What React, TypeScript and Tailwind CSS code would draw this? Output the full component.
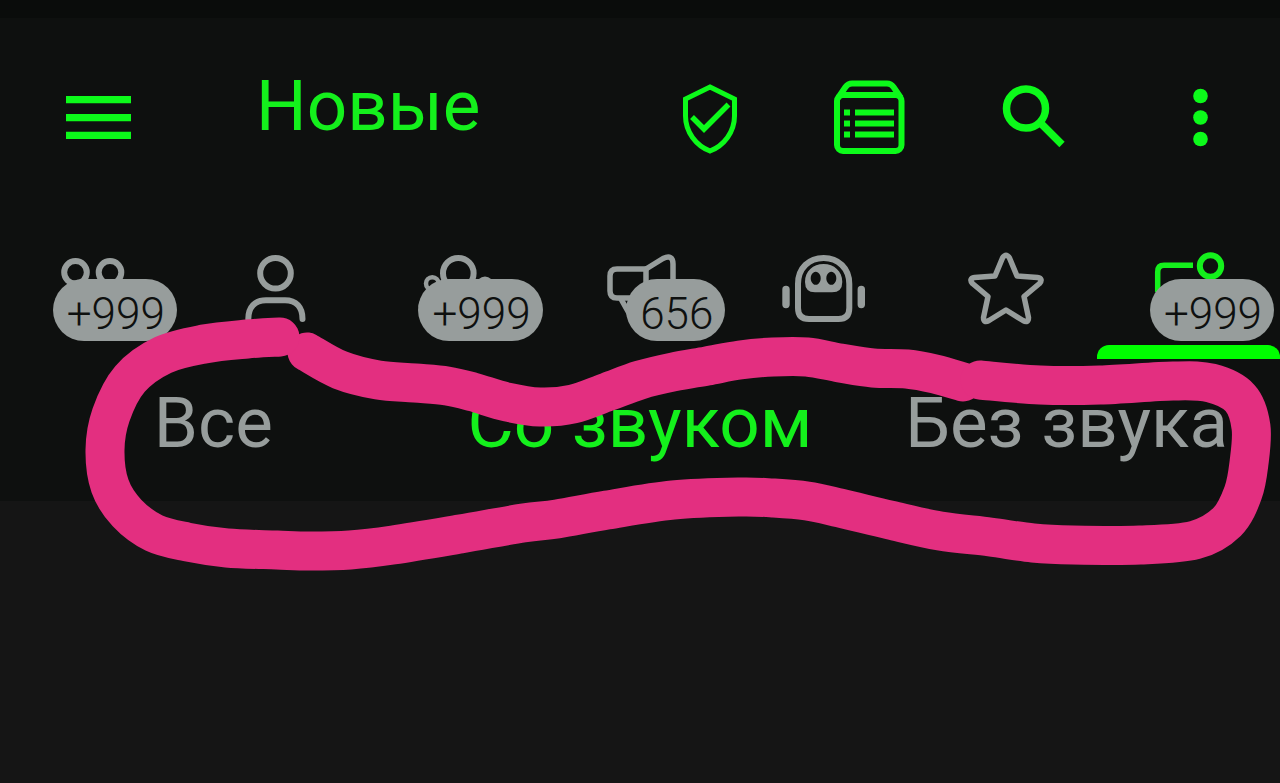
import React, { useState } from 'react';
import { clsx } from 'clsx';

type Point = [number, number];

// Catmull-Rom spline through the points of a hand-drawn stroke
function smoothPath(points: Point[]) {
  let d = `M${points[0][0]} ${points[0][1]}`;
  for (let i = 0; i < points.length - 1; i++) {
    const p0 = points[Math.max(i - 1, 0)];
    const p1 = points[i];
    const p2 = points[i + 1];
    const p3 = points[Math.min(i + 2, points.length - 1)];
    d += ` C${p1[0] + (p2[0] - p0[0]) / 6} ${p1[1] + (p2[1] - p0[1]) / 6}`;
    d += ` ${p2[0] - (p3[0] - p1[0]) / 6} ${p2[1] - (p3[1] - p1[1]) / 6}`;
    d += ` ${p2[0]} ${p2[1]}`;
  }
  return d;
}

const topStroke: Point[] = [
  [307, 352], [340, 370], [378, 380], [415, 383], [447, 386], [473, 392], [507, 402], [540, 407],
  [573, 404], [607, 392], [640, 380], [673, 372], [707, 366], [740, 360], [773, 357], [807, 357],
  [840, 363], [873, 368], [907, 369], [935, 374], [963, 382],
];

const loopStroke: Point[] = [
  [980, 380], [1040, 385], [1100, 385], [1173, 381], [1211, 383], [1240, 398], [1251, 427],
  [1249, 463], [1243, 493], [1227, 522], [1195, 540], [1140, 545], [1073, 545], [1033, 543],
  [990, 537], [940, 531], [890, 520], [840, 508], [807, 501], [773, 498], [740, 497], [673, 500],
  [607, 510], [557, 519], [523, 523], [460, 534], [393, 545], [350, 550], [310, 551], [277, 550],
  [227, 548], [187, 542], [154, 533], [127, 513], [110, 486], [105, 450], [111, 415], [130, 379],
  [163, 355], [204, 344], [247, 339], [280, 337],
];

function Marker() {
  return (
    <svg
      viewBox="0 0 1280 783"
      className="absolute inset-x-0 top-0 w-full pointer-events-none"
      fill="none"
      stroke="#e32f80"
      strokeWidth="39"
      strokeLinecap="round"
      strokeLinejoin="round"
      aria-hidden="true"
    >
      <path d={smoothPath(topStroke)} />
      <path d={smoothPath(loopStroke)} />
    </svg>
  );
}

function HeaderIcon({ children }: { children: React.ReactNode }) {
  return (
    <svg viewBox="0 0 96 96" className="w-24 h-24" fill="none" stroke="currentColor" aria-hidden="true">
      {children}
    </svg>
  );
}

const actions = [
  {
    label: 'Защита',
    icon: (
      <g strokeWidth="5">
        <path d="M52 18 L76.5 30 V47 C76.5 63 66 76.5 52 82 C38 76.5 27.5 63 27.5 47 V30 Z" />
        <path d="M34 48 L46 60 L70.5 35.5" strokeWidth="5.5" />
      </g>
    ),
  },
  {
    label: 'Список',
    icon: (
      <>
        <rect x="15" y="26" width="64.5" height="56" rx="6" strokeWidth="6" />
        <path d="M16 29 L23.5 18 Q26 14.5 30 14.5 H65 Q69 14.5 71.5 18 L79 29" strokeWidth="6" />
        <path d="M22 43.5 H28 M33 43.5 H72 M22 54.5 H28 M33 54.5 H72 M22 65.5 H28 M33 65.5 H72" strokeWidth="6" />
      </>
    ),
  },
  {
    label: 'Поиск',
    icon: (
      <g strokeWidth="7.5">
        <circle cx="40" cy="39.5" r="19.5" />
        <path d="M53.5 53 L76 75.5" />
      </g>
    ),
  },
  {
    label: 'Меню',
    icon: (
      <g fill="currentColor" stroke="none">
        <circle cx="50.5" cy="27" r="7.3" />
        <circle cx="50.5" cy="48.5" r="7.3" />
        <circle cx="50.5" cy="70" r="7.3" />
      </g>
    ),
  },
];

const tabs = [
  {
    label: 'Группы',
    badge: '+999',
    icon: (
      <>
        <circle cx="32.5" cy="24.3" r="11.3" />
        <circle cx="67" cy="24.3" r="11.3" />
      </>
    ),
  },
  {
    label: 'Контакты',
    icon: (
      <>
        <circle cx="49.5" cy="25.3" r="15.3" />
        <path d="M22.3 71 C22.3 59 29 52.3 40 52.3 H59 C70 52.3 76.5 59 76.5 71" />
      </>
    ),
  },
  {
    label: 'Супергруппы',
    badge: '+999',
    icon: (
      <>
        <circle cx="49.3" cy="25.3" r="15.3" />
        <circle cx="23.3" cy="35.5" r="6.3" strokeWidth="4.5" />
        <circle cx="76" cy="37" r="6.3" strokeWidth="4.5" />
        <path d="M12 58 Q13 51 20 50" strokeWidth="5" />
      </>
    ),
  },
  {
    label: 'Каналы',
    badge: '656',
    icon: (
      <>
        <path d="M54 21 H25 Q18 21 18 28 V43 Q18 50 25 50 H54 Z" strokeWidth="5.5" />
        <path d="M54 21 L71 10.5 Q81 6 81 16 V60" strokeWidth="5.5" />
        <path d="M29 51 L38 67" strokeWidth="5.5" />
      </>
    ),
  },
  {
    label: 'Боты',
    icon: (
      <>
        <path d="M23 36 C23 20 34 10 48.7 10 C63 10 74.3 20 74.3 36 V60 Q74.3 71 63.5 71 H34 Q23 71 23 60 Z" />
        <path
          d="M30 34 C30 23 38 16 48.7 16 C59 16 67.3 23 67.3 34 Q67.3 44.3 57 44.3 H40 Q30 44.3 30 34 Z M40.7 23.8 a5 6.5 0 1 0 0.01 0 Z M56.3 23.8 a5 6.5 0 1 0 0.01 0 Z"
          fill="currentColor"
          fillRule="evenodd"
          stroke="none"
        />
        <path d="M11 41.5 V56.5 M86.3 41.5 V56.5" strokeWidth="7.4" />
      </>
    ),
  },
  {
    label: 'Избранное',
    icon: (
      <path
        d="M59 28 L51.5 10 Q48 4.5 44.5 10 L37 28 L16.5 29.5 Q10.5 30.5 14.5 35.5 L30 48.5 L25.5 69.5 Q25.5 75.5 31 72.5 L48 62 L65 72.5 Q70.5 75.5 70.5 69.5 L66 48.5 L81.5 35.5 Q85.5 30.5 79.5 29.5 Z"
        strokeWidth="5.5"
      />
    ),
  },
  {
    label: 'Новые',
    badge: '+999',
    icon: (
      <>
        <circle cx="69.5" cy="18" r="10.7" />
        <path d="M16.7 44 V24 Q16.7 17.3 23 17.3 H52" strokeWidth="5.5" strokeLinecap="butt" />
      </>
    ),
  },
];

const filters = ['Все', 'Со звуком', 'Без звука'];

export default function App() {
  const [activeTab, setActiveTab] = useState(6);
  const [activeFilter, setActiveFilter] = useState(1);

  return (
    <div className="relative min-h-screen overflow-hidden bg-[#151515] font-[Roboto,sans-serif]">
      <div className="bg-[#0e100f]">
        {/* Status bar edge */}
        <div className="h-[18px] bg-[#0a0c0b]" />

        {/* App bar */}
        <header className="flex items-center h-[198px] pl-12 text-[#0cfa1a]">
          <button type="button" aria-label="Открыть меню">
            <HeaderIcon>
              <path d="M18 30.7 H83 M18 48.7 H83 M18 66.3 H83" strokeWidth="7.3" />
            </HeaderIcon>
          </button>
          <h1 className="ml-28 mb-6 text-[71px] leading-none text-[#14f01c]">Новые</h1>
          <div className="flex ml-auto">
            {actions.map((action) => (
              <button key={action.label} type="button" aria-label={action.label} className="flex justify-center w-[164px]">
                <HeaderIcon>{action.icon}</HeaderIcon>
              </button>
            ))}
          </div>
        </header>

        {/* Chat type tabs */}
        <nav className="grid grid-cols-7">
          {tabs.map((tab, i) => (
            <button
              key={tab.label}
              type="button"
              aria-label={tab.label}
              onClick={() => setActiveTab(i)}
              className={clsx(
                'relative flex justify-center h-[143px] pt-8',
                i === activeTab ? 'text-[#14f01c]' : 'text-[#979d9c]'
              )}
            >
              <svg
                viewBox="0 0 96 80"
                className="w-24 h-20"
                fill="none"
                stroke="currentColor"
                strokeWidth="6"
                strokeLinecap="round"
                strokeLinejoin="round"
                aria-hidden="true"
              >
                {tab.icon}
              </svg>
              {tab.badge && (
                <span className="absolute right-[6px] top-[63px] h-[62px] pl-[14px] pr-3 pt-1 rounded-full bg-[#979d9c] text-[44px] leading-[62px] font-light text-[#0e100f]">
                  {tab.badge}
                </span>
              )}
              {i === activeTab && (
                <span className="absolute inset-x-0 bottom-0 h-[14px] rounded-t-xl bg-[#00ff00]" />
              )}
            </button>
          ))}
        </nav>

        {/* Sound filters */}
        <div className="grid grid-cols-3 h-[142px]">
          {filters.map((filter, i) => (
            <button
              key={filter}
              type="button"
              onClick={() => setActiveFilter(i)}
              className={clsx(
                'pb-4 text-[71px] leading-none whitespace-nowrap',
                i === activeFilter ? 'text-[#14f01c]' : 'text-[#979d9c]'
              )}
            >
              {filter}
            </button>
          ))}
        </div>
      </div>

      <Marker />
    </div>
  );
}
